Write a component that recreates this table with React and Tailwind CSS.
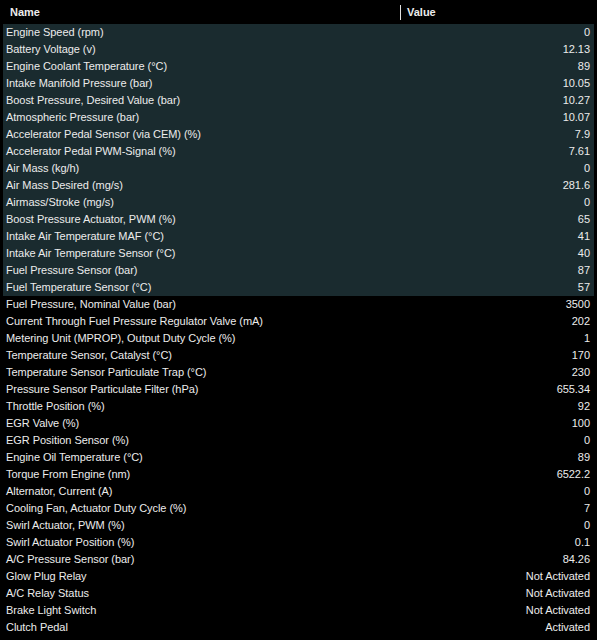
import React from "react";

const rows = [
  ["Engine Speed (rpm)", "0", true],
  ["Battery Voltage (v)", "12.13", true],
  ["Engine Coolant Temperature (°C)", "89", true],
  ["Intake Manifold Pressure (bar)", "10.05", true],
  ["Boost Pressure, Desired Value (bar)", "10.27", true],
  ["Atmospheric Pressure (bar)", "10.07", true],
  ["Accelerator Pedal Sensor (via CEM) (%)", "7.9", true],
  ["Accelerator Pedal PWM-Signal (%)", "7.61", true],
  ["Air Mass (kg/h)", "0", true],
  ["Air Mass Desired (mg/s)", "281.6", true],
  ["Airmass/Stroke (mg/s)", "0", true],
  ["Boost Pressure Actuator, PWM (%)", "65", true],
  ["Intake Air Temperature MAF (°C)", "41", true],
  ["Intake Air Temperature Sensor (°C)", "40", true],
  ["Fuel Pressure Sensor (bar)", "87", true],
  ["Fuel Temperature Sensor (°C)", "57", true],
  ["Fuel Pressure, Nominal Value (bar)", "3500"],
  ["Current Through Fuel Pressure Regulator Valve (mA)", "202"],
  ["Metering Unit (MPROP), Output Duty Cycle (%)", "1"],
  ["Temperature Sensor, Catalyst (°C)", "170"],
  ["Temperature Sensor Particulate Trap (°C)", "230"],
  ["Pressure Sensor Particulate Filter (hPa)", "655.34"],
  ["Throttle Position (%)", "92"],
  ["EGR Valve (%)", "100"],
  ["EGR Position Sensor (%)", "0"],
  ["Engine Oil Temperature (°C)", "89"],
  ["Torque From Engine (nm)", "6522.2"],
  ["Alternator, Current (A)", "0"],
  ["Cooling Fan, Actuator Duty Cycle (%)", "7"],
  ["Swirl Actuator, PWM (%)", "0"],
  ["Swirl Actuator Position (%)", "0.1"],
  ["A/C Pressure Sensor (bar)", "84.26"],
  ["Glow Plug Relay", "Not Activated"],
  ["A/C Relay Status", "Not Activated"],
  ["Brake Light Switch", "Not Activated"],
  ["Clutch Pedal", "Activated"],
];

export default function App() {
  return (
    <div
      className="w-[597px] h-[640px] bg-black text-[#ececec] text-[11px] leading-none overflow-hidden"
      style={{ fontFamily: '"Liberation Sans", Arial, sans-serif' }}
    >
      <div className="flex items-center h-6 font-bold">
        <div className="w-[400px] pl-[10px]">Name</div>
        <div className="w-px h-[15px] bg-[#e0e0e0]" />
        <div className="pl-[6px]">Value</div>
      </div>
      <div className="px-[3px]">
        {rows.map(([name, value, hl], i) => (
          <div
            key={i}
            className={
              "flex items-center justify-between h-[17px] pl-[3px] pr-[4px] pb-px tracking-[-0.05px] " +
              (hl ? "bg-[#1a2b2f]" : "")
            }
          >
            <span>{name}</span>
            <span>{value}</span>
          </div>
        ))}
      </div>
    </div>
  );
}
